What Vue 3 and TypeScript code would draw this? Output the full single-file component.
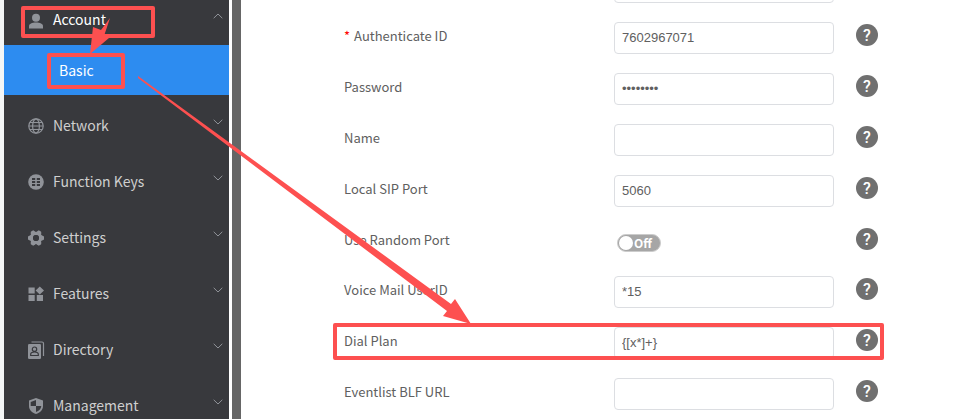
<script setup lang="ts">
import { ref } from 'vue'

type IconName = 'user' | 'globe' | 'keys' | 'gear' | 'blocks' | 'book' | 'shield'

interface MenuItem {
  label: string
  icon: IconName
  children?: string[]
}

interface Field {
  id: string
  label: string
  type: 'text' | 'password' | 'switch'
  value: string
  required?: boolean
}

const menu: MenuItem[] = [
  { label: 'Account', icon: 'user', children: ['Basic'] },
  { label: 'Network', icon: 'globe' },
  { label: 'Function Keys', icon: 'keys' },
  { label: 'Settings', icon: 'gear' },
  { label: 'Features', icon: 'blocks' },
  { label: 'Directory', icon: 'book' },
  { label: 'Management', icon: 'shield' },
]

const gearAngles = [0, 60, 120, 180, 240, 300]

const fields = ref<Field[]>([
  { id: 'register-name', label: '', type: 'text', value: '' },
  { id: 'auth-id', label: 'Authenticate ID', type: 'text', value: '7602967071', required: true },
  { id: 'password', label: 'Password', type: 'password', value: '12345678' },
  { id: 'name', label: 'Name', type: 'text', value: '' },
  { id: 'sip-port', label: 'Local SIP Port', type: 'text', value: '5060' },
  { id: 'random-port', label: 'Use Random Port', type: 'switch', value: '' },
  { id: 'voice-mail', label: 'Voice Mail UserID', type: 'text', value: '*15' },
  { id: 'dial-plan', label: 'Dial Plan', type: 'text', value: '{[x*]+}' },
  { id: 'blf-url', label: 'Eventlist BLF URL', type: 'text', value: '' },
])

const randomPort = ref(false)
</script>

<template>
  <div class="page">
    <nav class="sidebar">
      <template v-for="item in menu" :key="item.label">
        <button class="menu-item" :class="{ open: item.children }" type="button">
          <span class="menu-main">
            <svg class="menu-icon" viewBox="0 0 16 16" aria-hidden="true">
              <g v-if="item.icon === 'user'" fill="currentColor">
                <circle cx="8" cy="5.7" r="4" />
                <path d="M1 16.500v-2.200c0-2.500 3-3.700 7-3.700s7 1.200 7 3.700v2.200z" />
              </g>
              <g v-else-if="item.icon === 'globe'" fill="none" stroke="currentColor" stroke-width="1.2">
                <circle cx="8" cy="8" r="7.2" />
                <ellipse cx="8" cy="8" rx="3.4" ry="7.2" />
                <path d="M.8 8h14.4M1.8 4.5h12.4M1.8 11.5h12.4" />
              </g>
              <g v-else-if="item.icon === 'keys'">
                <circle cx="8" cy="8" r="7.8" fill="currentColor" />
                <path
                  d="M4 4h3.2v2.1H4zM8.8 4H12v2.1H8.8zM4 7h3.2v2.1H4zM8.8 7H12v2.1H8.8zM4 10h3.2v2.1H4zM8.8 10H12v2.1H8.8z"
                  fill="#38393d"
                />
              </g>
              <g v-else-if="item.icon === 'gear'">
                <circle cx="8" cy="8" r="4.6" fill="none" stroke="currentColor" stroke-width="3.4" />
                <path
                  v-for="angle in gearAngles"
                  :key="angle"
                  d="M12 5.5h2.2L16 6.6v2.8l-1.8 1.1H12z"
                  :transform="`rotate(${angle} 8 8)`"
                  fill="currentColor"
                />
                <circle cx="8" cy="8" r="3" fill="#38393d" />
              </g>
              <path
                v-else-if="item.icon === 'blocks'"
                fill="currentColor"
                d="M.5 1.5h6.2v6H.5zM.5 9h6.2v6H.5zM8.8 9H15v6H8.8zM11.8.5l4.2 4-4.2 4-4.2-4z"
              />
              <g v-else-if="item.icon === 'book'">
                <path d="M3.5 0H14a1.5 1.5 0 0 1 1.5 1.5V14" fill="none" stroke="currentColor" stroke-width="1.2" />
                <rect x="0" y="2" width="13" height="15" rx="1.2" fill="currentColor" />
                <circle cx="6.5" cy="7.2" r="2.2" fill="none" stroke="#38393d" stroke-width="1.2" />
                <path
                  d="M2.7 13.5v-1.3c0-1.6 1.6-2.2 3.8-2.2s3.8.6 3.8 2.2v1.3z"
                  fill="none"
                  stroke="#38393d"
                  stroke-width="1.2"
                />
              </g>
              <g v-else>
                <path d="M8 0l7 2.6V8c0 4-3 6.9-7 8-4-1.1-7-4-7-8V2.6z" fill="currentColor" />
                <path d="M8 2v6h5.3c-.3 2.9-2.3 5-5.3 6V8H2.7V3.9z" fill="#38393d" />
              </g>
            </svg>
            <span class="menu-label">{{ item.label }}</span>
          </span>
          <svg class="chevron" viewBox="0 0 10 6" aria-hidden="true">
            <path d="M.7.8L5 5 9.3.8" fill="none" stroke="currentColor" />
          </svg>
        </button>
        <a v-for="child in item.children" :key="child" class="submenu-item" href="#">{{ child }}</a>
      </template>
    </nav>
    <div class="divider"></div>

    <main class="content">
      <form class="form" @submit.prevent>
        <div v-for="field in fields" :key="field.id" class="row" :class="{ compact: field.type === 'switch' }">
          <label class="label" :for="field.id">
            <span v-if="field.required" class="required">*</span>{{ field.label }}
          </label>
          <span v-if="field.type === 'switch'" class="switch">
            <input :id="field.id" v-model="randomPort" class="switch-input" type="checkbox" role="switch" />
            <span class="switch-text">{{ randomPort ? 'On' : 'Off' }}</span>
          </span>
          <input v-else :id="field.id" v-model="field.value" class="text-input" :type="field.type" autocomplete="off" />
          <button v-if="field.label" class="help" type="button">?</button>
        </div>
      </form>
    </main>

    <svg class="annotations" width="966" height="419" viewBox="0 0 966 419" aria-hidden="true">
      <g fill="none" stroke="#fd5050" stroke-width="4" stroke-linejoin="round">
        <rect x="23" y="8" width="130" height="28" />
        <rect x="49" y="55" width="74" height="32" />
        <rect x="335" y="325" width="547" height="33" />
      </g>
      <g fill="#fd5050">
        <path d="M110 18L101 30 93 27 90 54 109 38 104 36z" />
        <path d="M138 76L451 304 455 299 471 324 443 316 447 311 138 78z" />
      </g>
    </svg>
  </div>
</template>

<style>
body {
  margin: 0;
  background: #fff;
}
</style>

<style scoped>
.page {
  position: relative;
  display: flex;
  height: 100vh;
  overflow: hidden;
  font-family: 'Noto Sans CJK SC', 'Noto Sans', sans-serif;
  background: #fff;
}

.sidebar {
  box-sizing: border-box;
  flex: 0 0 229px;
  display: flex;
  flex-direction: column;
  border-left: 4px solid #f4f6f6;
  margin-top: -11px;
  background: #38393d;
}

.menu-item {
  flex: none;
  display: flex;
  align-items: center;
  justify-content: space-between;
  height: 56px;
  padding: 0 6px 0 24px;
  border: 0;
  background: none;
  color: #909399;
  font: 14px/24px 'Noto Sans CJK SC', 'Noto Sans', sans-serif;
  cursor: pointer;
}

.menu-main {
  display: flex;
  align-items: center;
  gap: 9px;
  padding-top: 6px;
}

.menu-label {
  padding-bottom: 2px;
  color: #cfcfcf;
}

.open .menu-label {
  color: #fff;
}

.menu-icon {
  width: 16px;
  height: 16px;
  overflow: visible;
}

.chevron {
  width: 10px;
  height: 6px;
  margin-bottom: 2px;
}

.open .chevron {
  transform: rotate(180deg);
}

.submenu-item {
  flex: none;
  height: 50px;
  padding-left: 55px;
  background: #2d8cf0;
  color: #fff;
  font-size: 14px;
  line-height: 50px;
  text-decoration: none;
}

.divider {
  flex: 0 0 9px;
  margin-left: 3px;
  background: #666;
}

.content {
  flex: 1;
  min-width: 0;
  padding-left: 103px;
}

.form {
  margin-top: -29px;
}

.row {
  display: grid;
  grid-template-columns: 270px 220px 22px;
  align-items: start;
  height: 51px;
}

.row.compact {
  height: 50px;
}

.label {
  color: #606060;
  font-size: 13px;
  line-height: 28px;
}

.required {
  margin-right: 4px;
  color: #f00;
}

.text-input {
  box-sizing: border-box;
  width: 100%;
  height: 32px;
  padding: 0 7px 2px;
  border: 1px solid #dcdee2;
  border-radius: 4px;
  background: #fff;
  color: #606060;
  font: 13px 'Liberation Sans', Arial, sans-serif;
  outline: none;
}

.switch {
  position: relative;
  width: 44px;
  height: 18px;
  margin: 8px 0 0 3px;
}

.switch-input {
  appearance: none;
  display: block;
  box-sizing: border-box;
  width: 44px;
  height: 18px;
  margin: 0;
  border: 1px solid #ccc;
  border-radius: 9px;
  background: #a6a6a6;
}

.switch-input::before {
  content: '';
  display: block;
  width: 14px;
  height: 14px;
  margin: 1px;
  border-radius: 50%;
  background: #fff;
}

.switch-input:checked::before {
  margin-left: 27px;
}

.switch-text {
  position: absolute;
  top: 0;
  left: 17px;
  color: #fff;
  font: bold 12px/18px 'Noto Sans CJK SC', 'Noto Sans', sans-serif;
  pointer-events: none;
}

.help {
  width: 22px;
  height: 22px;
  margin: 2px 0 0 22px;
  padding: 0;
  border: 0;
  border-radius: 50%;
  background: #707070;
  color: #fff;
  font: 500 16px/24px Roboto, sans-serif;
}

.annotations {
  position: absolute;
  top: 0;
  left: 0;
  pointer-events: none;
}
</style>
